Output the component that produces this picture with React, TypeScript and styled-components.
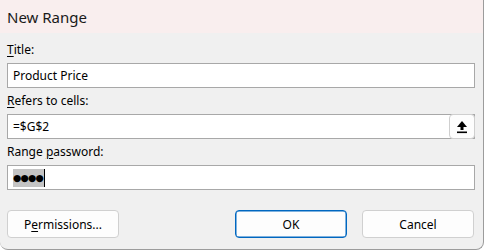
import React, { FC } from 'react';
import styled, { createGlobalStyle } from 'styled-components';

const GlobalStyle = createGlobalStyle`
  html, body { margin: 0; padding: 0; background: #ffffff; }
  * { box-sizing: border-box; }
`;

const Dialog = styled.div`
  width: 484px;
  height: 250px;
  display: flex;
  flex-direction: column;
  background: #f0f0f0;
  border-right: 1px solid #9c9c9c;
  border-bottom: 1px solid #9c9c9c;
  border-bottom-left-radius: 8px;
  border-bottom-right-radius: 8px;
  overflow: hidden;
  font-family: "Noto Sans", "Open Sans", sans-serif;
  font-size: 12px;
  color: #000;
`;

const TitleBar = styled.div`
  height: 33px;
  flex: none;
  display: flex;
  align-items: center;
  padding-left: 7px;
  background: #f9eeee;
  font-size: 15px;
  color: #1a1a1a;
`;

const Body = styled.div`
  display: flex;
  flex-direction: column;
  padding: 4px 8px 0 7px;
`;

const Label = styled.label`
  display: block;
  height: 26px;
  line-height: 26px;
  white-space: pre;
`;

const Key = styled.span`
  text-decoration: underline;
  text-underline-offset: 2px;
`;

const Field = styled.div`
  position: relative;
  height: 25px;
  display: flex;
  align-items: center;
  padding-left: 5px;
  background: #ffffff;
  border: 1px solid #a8a8a8;
`;

const PickButton = styled.button`
  position: absolute;
  right: -1px;
  top: -1px;
  width: 26px;
  height: 25px;
  padding: 0;
  display: flex;
  align-items: center;
  justify-content: center;
  background: #fdfdfd;
  border: 1px solid #cfcfcf;
  border-radius: 4px;
`;

const Selected = styled.span`
  background: #c4c4c4;
  font-family: "DejaVu Sans", sans-serif;
  font-size: 9.5px;
  line-height: 18px;
  letter-spacing: -0.8px;
  padding-right: 1px;
`;

const Caret = styled.span`
  width: 1px;
  height: 18px;
  background: #000;
`;

const Buttons = styled.div`
  display: flex;
  align-items: center;
  margin-top: 20px;
`;

const Button = styled.button<{ $primary?: boolean; $gap?: number }>`
  width: 112px;
  height: 28px;
  margin-left: ${p => p.$gap ?? 0}px;
  font-family: inherit;
  font-size: 12px;
  color: #000;
  background: #fdfdfd;
  border: 1px solid ${p => (p.$primary ? '#0067c0' : '#d0d0d0')};
  border-radius: 4px;
  box-shadow: ${p => (p.$primary ? 'inset 0 0 0 0.5px #0067c0' : 'none')};
`;

const UploadIcon: FC = () => (
  <svg width="12" height="14" viewBox="0 0 12 14">
    <polygon points="6,1 11,7 1,7" fill="#000" />
    <rect x="4.5" y="6" width="3" height="4" fill="#000" />
    <rect x="1" y="11.5" width="10" height="1.6" fill="#000" />
  </svg>
);

const App: FC = () => (
  <>
    <GlobalStyle />
    <Dialog>
      <TitleBar>New Range</TitleBar>
      <Body>
        <Label><Key>T</Key>itle:</Label>
        <Field>Product Price</Field>
        <Label><Key>R</Key>efers to cells:</Label>
        <Field>
          =$G$2
          <PickButton><UploadIcon /></PickButton>
        </Field>
        <Label>Range <Key>p</Key>assword:</Label>
        <Field>
          <Selected>●●●●</Selected>
          <Caret />
        </Field>
        <Buttons>
          <Button>P<Key>e</Key>rmissions...</Button>
          <Button $primary $gap={116}>OK</Button>
          <Button $gap={15}>Cancel</Button>
        </Buttons>
      </Body>
    </Dialog>
  </>
);

export default App;
